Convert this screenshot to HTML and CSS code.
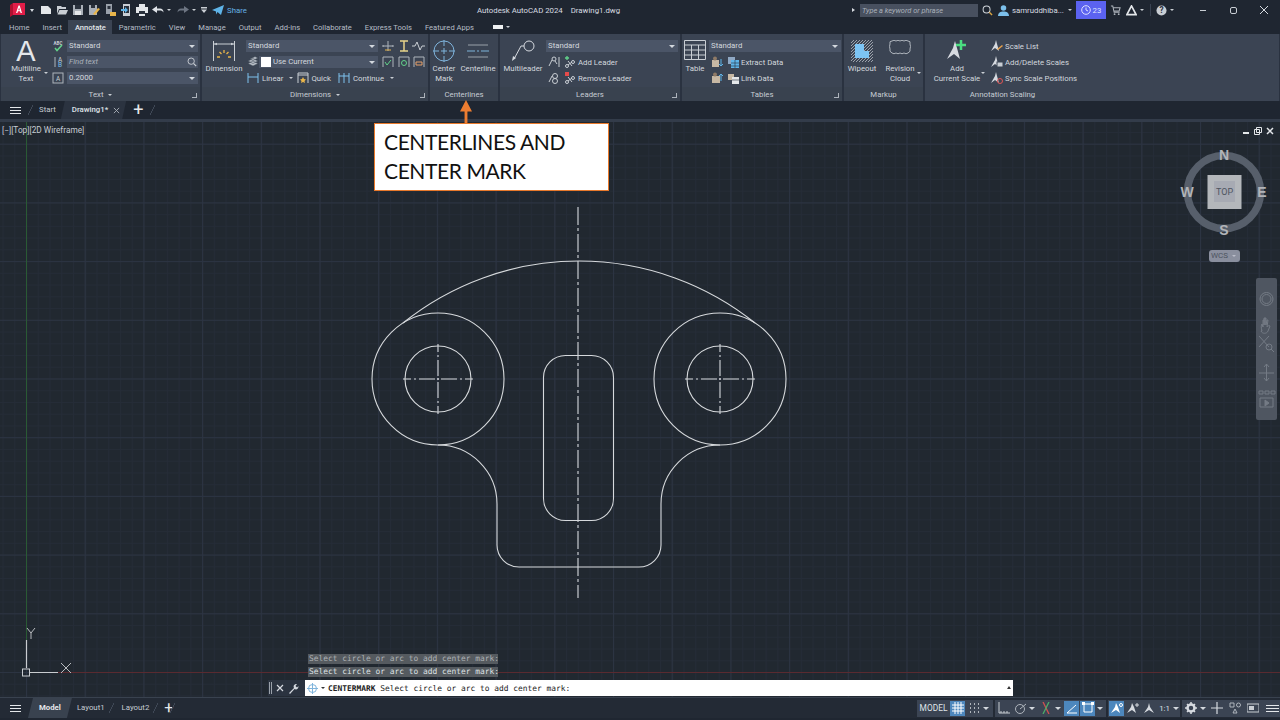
FILE: index.html
```html
<!DOCTYPE html>
<html lang="en">
<head>
<meta charset="utf-8">
<title>Autodesk AutoCAD 2024</title>
<link rel="stylesheet" href="styles.css">
</head>
<body>
<div class="app">
  <header class="titlebar">
    <div class="qa">
      <svg class="logo" width="16" height="14" viewBox="0 0 16 14"><path d="M0 2 3 0h12v12H3l-3 2z" fill="#b01030"/><rect x="3" y="0" width="12" height="12" fill="#e11d48"/><path d="M6 10 8.500 2.500h1.200L12 10h-1.400l-.5-1.700H7.900L7.400 10zM8.300 7.200h1.500l-.7-2.600z" fill="#fff"/></svg>
      <span class="caret lg"></span>
      <svg class="qi first" viewBox="0 0 12 12"><path d="M1 2h7l3 3v5H1z" fill="#e4e7ea"/></svg>
      <svg class="qi" viewBox="0 0 12 12"><path d="M1 2h4l1 1h4v2H3l-2 5zM3.500 6H12l-2 4.500H1.500z" fill="#c9ced4"/></svg>
      <svg class="qi" viewBox="0 0 12 12"><path d="M1 1h10v10H1z" fill="#aab0b8"/><rect x="3" y="1" width="6" height="4" fill="#2a313c"/><rect x="3" y="7" width="6" height="4" fill="#e4e7ea"/></svg>
      <svg class="qi" viewBox="0 0 12 12"><path d="M1 1h8v10H1z" fill="#aab0b8"/><rect x="3" y="1" width="4" height="3" fill="#2a313c"/><path d="m5 10 5-6 2 1-5 6z" fill="#e8b54a"/></svg>
      <svg class="qi" viewBox="0 0 12 12"><path d="M2 0h6v10H2z" fill="#9aa1aa"/><rect x="3.500" y="2" width="3" height="3" fill="#2a313c"/><path d="M6 8h6v4H6z" fill="#e8b54a"/></svg>
      <svg class="qi" viewBox="0 0 12 12"><path d="M3 0h7v12H3z" fill="#c9ced4"/><rect x="4" y="2" width="5" height="7" fill="#2a313c"/><path d="M1 5h4V3l3 3-3 3V7H1z" fill="#5fb4e8"/></svg>
      <svg class="qi" viewBox="0 0 12 12"><path d="M3 0h6v3H3zM0 3h12v6H9v3H3V9H0z" fill="#e4e7ea"/><rect x="3" y="7" width="6" height="3" fill="#2a313c"/></svg>
      <svg class="qi wide" viewBox="0 0 12 10"><path d="M5 1v2.500h3c2 0 3.500 1.500 3.500 4-1-1.500-2-2-3.500-2H5V8L0 4.500z" fill="#dfe3e8"/></svg>
      <span class="caret"></span>
      <svg class="qi wide dim" viewBox="0 0 12 10"><path d="M7 1v2.500H4C2 3.500.5 5 .5 7.500c1-1.500 2-2 3.500-2h3V8l5-3.500z" fill="#6d7582"/></svg>
      <span class="caret"></span>
      <span class="menu-glyph"></span>
      <svg class="share-ico" viewBox="0 0 12 10"><path d="M0 5 12 0 9 10 5.500 7 4 9.500V6.500z" fill="#5fb4e8"/></svg>
      <span class="share">Share</span>
    </div>
    <div class="doc"><span>Autodesk AutoCAD 2024</span><span>Drawing1.dwg</span></div>
    <div class="tools">
      <span class="caret-r"></span>
      <div class="search">Type a keyword or phrase</div>
      <svg class="ti" viewBox="0 0 12 12"><circle cx="5" cy="5" r="3.800" fill="none" stroke="#cfd4da" stroke-width="1.100"/><path d="m8 8 3 3" stroke="#d9a441" stroke-width="1.500"/></svg>
      <svg class="ti user" viewBox="0 0 12 12"><circle cx="6" cy="3.300" r="3" fill="#7cc0ec"/><path d="M0 12c0-3.500 2.500-5 6-5s6 1.500 6 5z" fill="#7cc0ec"/></svg>
      <span class="uname">samruddhiba...</span>
      <span class="caret"></span>
      <div class="trial"><svg width="10" height="10" viewBox="0 0 10 10"><circle cx="5" cy="5" r="4.300" fill="none" stroke="#dfe2ff"/><path d="M5 2.500V5l2 1" fill="none" stroke="#dfe2ff"/></svg>23</div>
      <svg class="ti cart" viewBox="0 0 12 12"><path d="M1 1h2l1.500 7h6M3.500 3H11l-1 3.500H4.200" fill="none" stroke="#aeb4bc" stroke-width="1.100"/><circle cx="5" cy="10" r="1" fill="#aeb4bc"/><circle cx="9.500" cy="10" r="1" fill="#aeb4bc"/></svg>
      <svg class="ti acad" viewBox="0 0 12 12"><path d="M6 1 11 10.500H1z" fill="none" stroke="#e4e7ea" stroke-width="1.800"/></svg>
      <span class="caret"></span>
      <span class="vsep"></span>
      <svg class="ti help" viewBox="0 0 12 12"><circle cx="6" cy="6" r="5.500" fill="#c9ced4"/><text x="6" y="9" class="help-t">?</text></svg>
      <span class="caret"></span>
      <span class="winbtn min"></span>
      <span class="winbtn max"></span>
      <svg class="winx" viewBox="0 0 8 8"><path d="m0 0 8 8M8 0 0 8" stroke="#d6dae0" stroke-width="1"/></svg>
    </div>
  </header>

  <nav class="tabs">
    <span class="tab">Home</span><span class="tab">Insert</span><span class="tab active">Annotate</span><span class="tab">Parametric</span><span class="tab">View</span><span class="tab">Manage</span><span class="tab">Output</span><span class="tab">Add-ins</span><span class="tab">Collaborate</span><span class="tab">Express Tools</span><span class="tab">Featured Apps</span>
    <span class="tab-extra"><i></i><span class="caret"></span></span>
  </nav>

  <section class="ribbon">
    <div class="panel p-text">
      <div class="pbody">
        <div class="bigbtn mtext"><span class="big-a">A</span><span class="lbl">Multiline<br>Text</span><span class="caret corner"></span></div>
        <div class="stack">
          <div class="row"><svg class="ri" viewBox="0 0 12 12"><text x="6" y="4.500" class="abc">ABC</text><path d="m3 8 2 2.500L10 5" fill="none" stroke="#62d38a" stroke-width="1.500"/></svg><div class="combo w131">Standard<span class="darrow"></span></div></div>
          <div class="row"><svg class="ri" viewBox="0 0 12 12"><path d="M3 1v10" stroke="#aeb4bc"/><text x="8" y="5.500" class="abc2">A</text><text x="8" y="11" class="abc3">B</text></svg><div class="combo w131 find">Find text<svg class="mag" viewBox="0 0 12 12"><circle cx="5" cy="5" r="3.800" fill="none" stroke="#c9ced4" stroke-width="1.100"/><path d="m8 8 3 3" stroke="#c9ced4" stroke-width="1.500"/></svg></div></div>
          <div class="row"><svg class="ri" viewBox="0 0 12 12"><rect x="1" y="1" width="10" height="10" fill="none" stroke="#aeb4bc"/><text x="6" y="9" class="abc2">A</text></svg><div class="combo w131">0.2000<span class="darrow"></span></div></div>
        </div>
      </div>
      <div class="ptitle">Text <span class="caret"></span><span class="launch"></span></div>
    </div>

    <div class="panel p-dim">
      <div class="pbody">
        <div class="bigbtn dimb">
          <svg width="22" height="22" viewBox="0 0 22 22"><path d="M.5 1v20M21.500 1v20M1 4h20" fill="none" stroke="#c9ced4"/><path d="M1 4l3-1.200v2.400zM21 4l-3-1.200v2.400z" fill="#c9ced4"/><path d="M11 10v3M6.500 12l2 2M15.500 12l-2 2M4 17h3M15 17h3" stroke="#e8b54a" stroke-width="1.300"/></svg>
          <span class="lbl">Dimension</span>
        </div>
        <div class="stack">
          <div class="row"><div class="combo w132">Standard<span class="darrow"></span></div>
            <svg class="si first" viewBox="0 0 14 12"><path d="M7 1v10M2 5v2M12 5v2M2 6h10" stroke="#aeb4bc" fill="none"/><path d="M4 10h6" stroke="#e8b54a"/></svg>
            <svg class="si" viewBox="0 0 14 12"><path d="M3 1h8M3 11h8" stroke="#e8d38a" stroke-width="1.500"/><path d="M7 1v10" stroke="#e8d38a" stroke-width="1.500"/></svg>
            <svg class="si" viewBox="0 0 14 12"><path d="M0 6h3l2-4 3 8 2-4h3" stroke="#c9ced4" fill="none"/></svg>
          </div>
          <div class="row">
            <svg class="li" viewBox="0 0 12 12"><path d="M1 7.500 6 5l5 2.500L6 10zM1 5 6 2.500 11 5 6 7.500zM3 3 8 .5 11 2 6 4.500z" fill="#b9bfc7" stroke="#3b4453" stroke-width=".5"/></svg>
            <div class="combo w119"><i class="swatch"></i>Use Current<span class="darrow"></span></div>
            <svg class="si first" viewBox="0 0 14 12"><path d="M2 11V1h10v10" fill="none" stroke="#aeb4bc"/><path d="m4 6 2 3 4-5" fill="none" stroke="#62d38a"/></svg>
            <svg class="si" viewBox="0 0 14 12"><path d="M2 11V1h10v10" fill="none" stroke="#aeb4bc"/><circle cx="7" cy="7" r="2.500" fill="none" stroke="#62d38a"/></svg>
            <svg class="si" viewBox="0 0 14 12"><path d="M2 11V1h10v10" fill="none" stroke="#aeb4bc"/><path d="M4 6h6v3H4z" fill="none" stroke="#e8a06a"/></svg>
          </div>
          <div class="row tools3">
            <svg class="di" viewBox="0 0 12 12"><path d="M1 1v10M11 1v10M1 5h10" fill="none" stroke="#7fc1ee"/></svg><span>Linear</span><span class="caret"></span>
            <svg class="di gap" viewBox="0 0 12 12"><path d="M1 11V1h10v10M1 3h10" fill="none" stroke="#c9ced4"/><path d="M6 5l1 2 2 .5-1.500 1.500.5 2-2-1-2 1 .5-2L3 7.500 5 7z" fill="#e8b54a"/></svg><span>Quick</span>
            <svg class="di gap" viewBox="0 0 12 12"><path d="M1 1v10M6 1v10M11 1v10M1 4h10" fill="none" stroke="#7fc1ee"/></svg><span>Continue</span><span class="caret"></span>
          </div>
        </div>
      </div>
      <div class="ptitle">Dimensions <span class="caret"></span><span class="launch"></span></div>
    </div>

    <div class="panel p-center">
      <div class="pbody">
        <div class="bigbtn cmark">
          <svg width="22" height="22" viewBox="0 0 22 22"><circle cx="11" cy="11" r="10" fill="none" stroke="#7fb4dc"/><path d="M0 11h6M8 11h6M16 11h6M11 0v6M11 8v6M11 16v6" stroke="#7fb4dc"/></svg>
          <span class="lbl">Center<br>Mark</span>
        </div>
        <div class="bigbtn cline">
          <svg width="22" height="22" viewBox="0 0 22 22"><path d="M1 5h20M1 17h20" stroke="#9aa1aa"/><path d="M0 11h8M10 11h2M14 11h8" stroke="#7fb4dc"/></svg>
          <span class="lbl">Centerline</span>
        </div>
      </div>
      <div class="ptitle">Centerlines</div>
    </div>

    <div class="panel p-lead">
      <div class="pbody">
        <div class="bigbtn mlead">
          <svg width="24" height="22" viewBox="0 0 24 22"><circle cx="18" cy="6" r="5" fill="none" stroke="#d6dae0"/><path d="M13 6h-3L3 19" fill="none" stroke="#d6dae0"/><path d="m1 21 1-5 3 2z" fill="#d6dae0"/></svg>
          <span class="lbl">Multileader</span>
        </div>
        <div class="stack">
          <div class="row"><div class="combo w132">Standard<span class="darrow"></span></div></div>
          <div class="row act"><svg class="ai" viewBox="0 0 12 12"><circle cx="6" cy="3" r="2" fill="none" stroke="#c9ced4"/><path d="M4 4 1 10M7 5l2 3M11 1v10" fill="none" stroke="#c9ced4"/></svg><svg class="ai" viewBox="0 0 12 12"><path d="M3 0v4M1 2h4" stroke="#62d38a" stroke-width="1.300"/><circle cx="9" cy="6" r="1.500" fill="none" stroke="#c9ced4"/><circle cx="3" cy="10" r="1.500" fill="none" stroke="#c9ced4"/><path d="m4 9 4-3M4 5l4 5" stroke="#c9ced4"/></svg><span>Add Leader</span></div>
          <div class="row act"><svg class="ai" viewBox="0 0 12 12"><circle cx="7" cy="4" r="2.500" fill="none" stroke="#c9ced4"/><circle cx="7" cy="9" r="2.500" fill="none" stroke="#c9ced4"/><path d="M4 4 1 10" stroke="#c9ced4"/></svg><svg class="ai" viewBox="0 0 12 12"><path d="M1 0h4v4H1z" fill="#e54b4b"/><circle cx="9" cy="6" r="1.500" fill="none" stroke="#c9ced4"/><circle cx="3" cy="10" r="1.500" fill="none" stroke="#c9ced4"/><path d="m4 9 4-3M4 5l4 5" stroke="#c9ced4"/></svg><span>Remove Leader</span></div>
        </div>
      </div>
      <div class="ptitle">Leaders<span class="launch"></span></div>
    </div>

    <div class="panel p-table">
      <div class="pbody">
        <div class="bigbtn tbl">
          <svg width="22" height="20" viewBox="0 0 22 20"><path d="M.5.5h21v19H.5zM.5 5h21M.5 10h21M.5 15h21M7.500 5v15M14.500 5v15" fill="none" stroke="#c9ced4"/></svg>
          <span class="lbl">Table</span>
        </div>
        <div class="stack">
          <div class="row"><div class="combo w132">Standard<span class="darrow"></span></div></div>
          <div class="row act"><svg class="ai" viewBox="0 0 12 12"><path d="M1 4h7v7H1z" fill="#c7b8a4"/><circle cx="4" cy="2.500" r="2" fill="#8f7a66"/><path d="M10 3v7M8 8l2 2 2-2" fill="none" stroke="#5fb4e8"/></svg><svg class="ai" viewBox="0 0 12 12"><path d="M1 1h7v7H1z" fill="#8fa8c4"/><path d="M4 4h8v8H4z" fill="#5fb4e8"/><path d="M4 7h8M4 10h8M8 4v8" stroke="#2a313c" stroke-width=".6"/></svg><span>Extract Data</span></div>
          <div class="row act"><svg class="ai" viewBox="0 0 12 12"><path d="M1 4h8v7H1z" fill="#c7b8a4"/><circle cx="4" cy="2.500" r="2" fill="#8f7a66"/><path d="M10 9V2M8 4l2-2 2 2" fill="none" stroke="#5fb4e8"/></svg><svg class="ai" viewBox="0 0 12 12"><path d="M1 2h6v6H1z" fill="#c7b8a4"/><path d="M5 5h7v7H5z" fill="#e4e7ea"/><path d="M5 8h7" stroke="#2a313c" stroke-width=".6"/></svg><span>Link Data</span></div>
        </div>
      </div>
      <div class="ptitle">Tables<span class="launch"></span></div>
    </div>

    <div class="panel p-mark">
      <div class="pbody">
        <div class="bigbtn wipe">
          <svg width="22" height="22" viewBox="0 0 22 22"><defs><pattern id="hatch" width="3" height="3" patternUnits="userSpaceOnUse"><path d="M0 3 3 0" stroke="#b5bac1" stroke-width=".8"/></pattern></defs><rect width="22" height="22" fill="url(#hatch)"/><path d="M4 4h9v7h5v7H4z" fill="#7cc4f4"/></svg>
          <span class="lbl">Wipeout</span>
        </div>
        <div class="bigbtn rev">
          <svg width="22" height="18" viewBox="0 0 22 18"><path d="M3 1q2-1.500 4 0 2-1.500 4 0 2-1.500 4 0 2-1.500 4 0 3 0 2 3 1 2.500 0 5 1 2.500-2 4-2 1.500-4 0-2 1.500-4 0-2 1.500-4 0-2 1.500-4 0-3-1.500-2-4-1-2.500 0-5-1-3 2-3z" fill="none" stroke="#aeb4bc"/></svg>
          <span class="lbl">Revision<br>Cloud</span><span class="caret corner"></span>
        </div>
      </div>
      <div class="ptitle">Markup</div>
    </div>

    <div class="panel p-scale">
      <div class="pbody">
        <div class="bigbtn addscale">
          <svg width="22" height="22" viewBox="0 0 22 22"><path d="M9 1 7 8 1 19l7-5 6 5-3-11z" fill="#d6dae0"/><path d="M15 0v10M10 5h10" stroke="#4ade80" stroke-width="2.500"/></svg>
          <span class="lbl">Add<br>Current Scale</span><span class="caret corner"></span>
        </div>
        <div class="stack">
          <div class="row act"><svg class="ai" viewBox="0 0 12 12"><path d="M5 0 4 4 0 11l4-3 4 3-2-7z" fill="#d6dae0"/><path d="m6 9 5-4 1 1-5 4z" fill="#e8a04a"/></svg><span>Scale List</span></div>
          <div class="row act"><svg class="ai" viewBox="0 0 12 12"><path d="M5 0 4 4 0 11l4-3 4 3-2-7z" fill="#d6dae0"/><rect x="6" y="6" width="6" height="5" fill="#c9ced4" stroke="#3b4453"/></svg><span>Add/Delete Scales</span></div>
          <div class="row act"><svg class="ai" viewBox="0 0 12 12"><path d="M5 0 4 4 0 11l4-3 4 3-2-7z" fill="#d6dae0"/><circle cx="9" cy="9" r="2.500" fill="none" stroke="#e05555"/></svg><span>Sync Scale Positions</span></div>
        </div>
      </div>
      <div class="ptitle short">Annotation Scaling</div>
    </div>
  </section>

  <div class="filetabs">
    <span class="ham"><i></i><i></i><i></i></span>
    <span class="slash"></span>
    <span class="ftab">Start</span>
    <span class="ftab current">Drawing1*<svg class="x" viewBox="0 0 8 8"><path d="m1 1 6 6M7 1 1 7" stroke="#aeb4bc"/></svg></span>
    <span class="plus">+</span>
    <span class="slash"></span>
  </div>

  <main class="stage">
    <svg class="canvas" viewBox="0 122 1280 576" width="1280" height="576">
      <defs>
        <pattern id="minor" x="26" y="2.820" width="11.740" height="11.740" patternUnits="userSpaceOnUse"><path d="M.5 0v11.740M0 .5h11.740" stroke="#252c37" fill="none"/></pattern>
        <pattern id="major" x="26" y="26.300" width="58.700" height="58.700" patternUnits="userSpaceOnUse"><path d="M.5 0v58.700M0 .5h58.700" stroke="#2c3442" fill="none"/></pattern>
        <path id="cmark" d="M-35 0H-27M-24 0H-22M-19 0H-3M-1 0H1M3 0H19M22 0H24M27 0H35M0 -35V-27M0 -24V-22M0 -19V-3M0 -1V1M0 3V19M0 22V24M0 27V35"/>
      </defs>
      <rect x="0" y="122" width="1280" height="576" fill="#212830"/>
      <rect x="0" y="122" width="1280" height="576" fill="url(#minor)"/>
      <rect x="0" y="122" width="1280" height="576" fill="url(#major)"/>
      <path d="M26.500 122V640" stroke="#2a5a34"/>
      <path d="M58 672.500H1280" stroke="#5a2a30"/>
      <g fill="none" stroke="#d6d9dc" stroke-width="1.100">
        <circle cx="438" cy="379" r="66"/>
        <circle cx="438" cy="379" r="33"/>
        <circle cx="720" cy="379" r="66"/>
        <circle cx="720" cy="379" r="33"/>
        <path d="M403 323A281 281 0 0 1 755 323"/>
        <rect x="543.500" y="355.500" width="70" height="165" rx="22"/>
        <path d="M438 445A59 59 0 0 1 497 504V545A22 22 0 0 0 519 567H639A22 22 0 0 0 661 545V504A59 59 0 0 1 720 445"/>
        <path d="M578 207V598" stroke-dasharray="18 3 3 3"/>
        <use href="#cmark" x="438" y="379"/>
        <use href="#cmark" x="720" y="379"/>
      </g>
      <g fill="none" stroke="#c9ccd0">
        <path d="M26.500 640V668M30 672.500H58" stroke-width="1.200"/>
        <rect x="22.500" y="669" width="7" height="7"/>
        <path d="m27 628 4 5 4-5M31 633v6M61 663l10 10M71 663l-10 10" stroke-width=".9"/>
      </g>
      <g>
        <circle cx="1224" cy="192" r="36.500" fill="none" stroke="#575f6b" stroke-width="7.500"/>
        <rect x="1207.500" y="175" width="34" height="34" fill="#b4b7bb"/>
        <rect x="1214" y="181" width="21" height="21" fill="#a7aab3"/>
        <text class="vc-top" x="1224.500" y="195">TOP</text>
        <text class="vc" x="1224" y="160">N</text>
        <text class="vc" x="1187" y="197">W</text>
        <text class="vc" x="1262" y="197">E</text>
        <text class="vc" x="1224" y="235">S</text>
      </g>
    </svg>

    <div class="vp-label">[−][Top][2D Wireframe]</div>
    <div class="vp-ctrl">
      <svg width="8" height="8" viewBox="0 0 8 8"><path d="M1 6h6" stroke="#e4e7ea" stroke-width="2"/></svg>
      <svg width="8" height="8" viewBox="0 0 8 8"><path d="M2.500 .5h5v5h-5zM.5 2.500h5v5h-5z" fill="#212830" stroke="#e4e7ea"/></svg>
      <svg width="8" height="8" viewBox="0 0 8 8"><path d="m1 1 6 6M7 1 1 7" stroke="#e4e7ea" stroke-width="1.500"/></svg>
    </div>
    <div class="wcs">WCS<span class="caret"></span></div>

    <div class="navbar">
      <svg viewBox="0 0 21 142" width="21" height="142">
        <g fill="none" stroke="#747b85">
          <circle cx="10.500" cy="21" r="6.500"/><circle cx="10.500" cy="21" r="4.500"/>
          <path d="M6 53c-1-3-1-6 0-7l1 3V42h1v5-7h1v7-7h1v7l1-5h1l-1 7c1-1 2-2 3-1l-2 5c-1 3-6 3-7 0z"/>
          <path d="M3 58l10 11M13 58 3 69"/><circle cx="13" cy="69" r="3"/><path d="m15 71 3 3"/>
          <path d="M10.500 86v17M3 95h15M8 89l2.500-3 2.500 3M8 100l2.500 3 2.500-3"/>
          <path d="M3 113h4v3H3zM9 113h4v3H9zM15 113h4v3h-4zM4 120h13v9H4z"/><path d="m9 122 4 3-4 3z" fill="#747b85"/>
        </g>
      </svg>
    </div>

    <div class="callout">CENTERLINES AND<br>CENTER MARK</div>

    <div class="cmd-history"><div class="h1">Select circle or arc to add center mark:</div><div class="h2">Select circle or arc to add center mark:</div></div>
    <div class="cmd">
      <div class="cmd-tools"><span class="grip"></span>
        <svg width="8" height="8" viewBox="0 0 8 8"><path d="m1 1 6 6M7 1 1 7" stroke="#d6dae0" stroke-width="1.200"/></svg>
        <svg width="11" height="11" viewBox="0 0 11 11"><path d="M1 10 6 5c-1-2 0-4 3-4L7.500 3 9 4.500 10.500 3c0 3-2 4-4 3L2 11z" fill="#d6dae0"/></svg>
      </div>
      <div class="cmd-input">
        <svg class="cm-ico" width="11" height="11" viewBox="0 0 11 11"><circle cx="5.500" cy="5.500" r="4" fill="none" stroke="#7fb4dc"/><path d="M0 5.500h11M5.500 0v11" stroke="#7fb4dc"/></svg>
        <span class="caret black"></span>
        <span class="cmd-text"><b>CENTERMARK</b> Select circle or arc to add center mark:</span>
        <span class="up"></span>
      </div>
    </div>

    <div class="arrow"></div>
  </main>

  <footer class="statusbar">
    <span class="ham st"><i></i><i></i><i></i></span>
    <span class="ltab current">Model</span><span class="ltab">Layout1</span><span class="slash lt"></span><span class="ltab">Layout2</span><span class="slash lt"></span>
    <span class="plus st">+</span><span class="slash lt"></span>
    <div class="stat">
      <div class="seg s1">
        <span class="model">MODEL</span>
        <span class="sb on"><svg viewBox="0 0 12 12"><path d="M3 0v12M6 0v12M9 0v12M0 3h12M0 6h12M0 9h12" stroke="#fff"/></svg></span>
        <span class="sb"><svg viewBox="0 0 12 12"><path d="M2 2h1M6 2h1M10 2h1M2 6h1M6 6h1M10 6h1M2 10h1M6 10h1M10 10h1" stroke="#d6dae0" stroke-width="1.500"/></svg></span>
        <span class="arw"></span>
      </div>
      <div class="seg s2">
        <span class="sb"><svg viewBox="0 0 12 12"><path d="M1 0v11h11M3 11V9M6 11V9M9 11V9" fill="none" stroke="#c9ced4"/></svg></span>
        <span class="sb"><svg viewBox="0 0 12 12"><circle cx="6" cy="7" r="4.500" fill="none" stroke="#aeb4bc"/><path d="M6 7l6-5" stroke="#aeb4bc"/></svg></span><span class="arw"></span>
        <span class="sb"><svg viewBox="0 0 12 12"><path d="M3 0 9 12" stroke="#d05050" stroke-width="1.300"/><path d="M6 6 9 0" stroke="#4caf6a" stroke-width="1.300"/><path d="M6 6 3 12" stroke="#4caf6a" stroke-width="1.300"/></svg></span><span class="arw"></span>
        <span class="sb on"><svg viewBox="0 0 12 12"><path d="M1 11 10 3M1 11h10" fill="none" stroke="#fff"/></svg></span>
        <span class="sb on"><svg viewBox="0 0 12 12"><path d="M2 2h8v8H2z" fill="none" stroke="#fff"/><path d="M0 0h3v3H0zM9 0h3v3H9z" fill="#fff"/></svg></span><span class="arw"></span>
      </div>
      <div class="seg s3">
        <span class="sb on"><svg viewBox="0 0 12 12"><path d="M5 1 4 5 0 11l5-3 4 3-2-6z" fill="#fff"/><circle cx="10" cy="3" r="1.500" fill="none" stroke="#fff"/></svg></span>
        <span class="sb"><svg viewBox="0 0 12 12"><path d="M5 1 4 5 0 11l5-3 4 3-2-6z" fill="#d6dae0"/><path d="M10 1v4M8 3h4" stroke="#d6dae0"/></svg></span>
        <span class="sb"><svg viewBox="0 0 12 12"><path d="M6 1 5 5 1 11l5-3 5 3-4-6z" fill="#d6dae0"/></svg></span>
        <span class="scale">1:1</span><span class="arw"></span>
      </div>
      <div class="seg s4">
        <span class="sb"><svg viewBox="0 0 12 12"><circle cx="6" cy="6" r="3.500" fill="none" stroke="#d6dae0" stroke-width="2.500"/><path d="M6 0v2M6 10v2M0 6h2M10 6h2M2 2l1.500 1.500M8.500 8.500 10 10M10 2 8.500 3.500M2 10l1.500-1.500" stroke="#d6dae0" stroke-width="1.500"/></svg></span><span class="arw"></span>
        <span class="sb"><svg viewBox="0 0 12 12"><path d="M6 0v12M0 6h12" stroke="#d6dae0" stroke-width="1.200"/></svg></span>
        <span class="sb mg"><svg viewBox="0 0 12 12"><path d="M1 1h4v4H1zM4 11l2-4 2 4z" fill="none" stroke="#aeb4bc"/><circle cx="9.500" cy="3" r="2" fill="none" stroke="#aeb4bc"/></svg></span>
        <span class="sb mg"><svg viewBox="0 0 12 12"><rect x="0" y="2" width="12" height="8" fill="none" stroke="#c9ced4"/><rect x="2" y="4" width="5" height="4" fill="#c9ced4"/></svg></span>
        <span class="ham st2"><i></i><i></i><i></i></span>
      </div>
    </div>
  </footer>
</div>
</body>
</html>
```
FILE: styles.css
```css
* { box-sizing: border-box; }
html, body { margin: 0; padding: 0; background: #0f1317; }
body { width: 1280px; height: 720px; overflow: hidden; }
.app {
  width: 1280px; height: 720px; display: flex; flex-direction: column;
  font-family: Roboto, "Open Sans", sans-serif; font-size: 7.800px; color: #d3d8de;
  background: #1f2631; position: relative;
}
svg { display: block; flex: none; }

.caret { display: inline-block; width: 0; height: 0; border: 2px solid transparent; border-top: 2.500px solid #c9ced4; border-bottom: 0; margin-left: 3px; vertical-align: middle; flex: none; }
.caret.lg { border-width: 2.500px; border-bottom: 0; border-top: 3px solid #d6dae0; margin-left: 4px; }
.caret.black { border-top-color: #333; margin: 0 3px 0 3px; }
.caret-r { width: 0; height: 0; border: 2.500px solid transparent; border-left: 3px solid #d6dae0; border-right: 0; margin-right: 5px; }

/* Title bar */
.titlebar { height: 20px; display: flex; align-items: center; flex: none; }
.qa { width: 477px; display: flex; align-items: center; padding-left: 10px; }
.qi { width: 12px; height: 12px; margin-right: 4px; }
.qi.first { margin-left: 6px; }
.qi.wide { margin-right: 0; }
.qi.dim { margin-left: 6px; }
.menu-glyph { width: 6px; height: 6px; margin: 0 0 0 5px; background: #c9ced4; clip-path: polygon(0 0, 100% 0, 100% 25%, 0 25%, 0 40%, 100% 40%, 50% 100%, 0 40%); }
.share-ico { width: 12px; height: 10px; margin-left: 5px; }
.share { margin-left: 3px; color: #66b2e6; }
.doc { width: 375px; display: flex; gap: 8px; color: #d8dce1; }
.tools { display: flex; align-items: center; flex: 1; }
.search { width: 118px; height: 13px; background: #48505f; color: #aab1ba; font-style: italic; font-size: 7.400px; padding-left: 2px; line-height: 13px; }
.ti { width: 11px; height: 11px; margin-left: 4px; }
.ti.user { margin-left: 5px; }
.uname { margin-left: 3px; color: #d8dce1; width: 53px; white-space: nowrap; }
.trial { width: 30px; height: 18px; margin-left: 4px; background: #5b62f0; color: #dfe2ff; display: flex; align-items: center; justify-content: center; gap: 2px; }
.ti.cart { margin-left: 4px; }
.ti.acad { margin-left: 5px; }
.vsep { width: 1px; height: 12px; background: #3a4352; margin: 0 5px 0 6px; }
.ti.help { margin-left: 0; }
.help-t { font: bold 9px Roboto, sans-serif; fill: #2a313c; text-anchor: middle; }
.winbtn { display: block; width: 6px; }
.winbtn.min { height: 1px; background: #c9ced4; margin-left: 26px; }
.winbtn.max { width: 7px; height: 7px; border: 1px solid #c9ced4; border-radius: 2px; margin-left: 24px; }
.winx { width: 8px; height: 8px; margin-left: 23px; }

/* Tabs */
.tabs { height: 14px; display: flex; align-items: stretch; padding-left: 2.500px; flex: none; font-size: 7.600px; }
.tab { padding: 0 6.500px; line-height: 16px; color: #b6bdc6; white-space: nowrap; }
.tab.active { background: #3b4453; color: #e2e6ea; font-weight: 500; }
.tab-extra { display: flex; align-items: center; margin-left: 13px; }
.tab-extra i { display: block; width: 10px; height: 4.500px; background: #eef0f2; }

/* Ribbon */
.ribbon { height: 67px; flex: none; display: flex; gap: 2px; padding-left: 1px; background: #2a3240; }
.panel { background: #3b4453; display: flex; flex-direction: column; flex: none; }
.pbody { flex: 1; display: flex; min-height: 0; padding-top: 6px; }
.ptitle { height: 14px; line-height: 15px; text-align: center; color: #c6ccd3; position: relative; background: #39424f; }
.ptitle.short { width: 155px; background: transparent; }
.launch { position: absolute; right: 3px; bottom: 3px; width: 5px; height: 5px; border-right: 1px solid #aeb4bc; border-bottom: 1px solid #aeb4bc; }
.p-text { width: 199px; }
.p-dim { width: 226px; }
.p-center { width: 68px; }
.p-lead { width: 180px; }
.p-table { width: 160px; }
.p-mark { width: 79px; }
.p-scale { width: 354px; }

.bigbtn { display: grid; grid-template-rows: 22px auto; row-gap: 2px; justify-items: center; position: relative; flex: none; }
.lbl { display: block; text-align: center; line-height: 10px; white-space: nowrap; }
.corner { position: absolute; right: 0; top: 32px; margin: 0; }
.mtext { width: 50px; }
.mtext .corner { right: 3px; }
.big-a { font-size: 29px; line-height: 23px; height: 22px; color: #e4e7ea; font-family: "Liberation Sans", sans-serif; }
.dimb { width: 44px; }
.cmark { width: 28px; }
.cline { width: 40px; }
.mlead { width: 46px; }
.tbl { width: 26px; }
.wipe { width: 36px; }
.rev { width: 38px; margin-left: 1px; }
.rev .corner { right: -2px; }
.addscale { width: 64px; }
.addscale .corner { right: 4px; }

.stack { display: flex; flex-direction: column; gap: 4px; }
.row { height: 12px; display: flex; align-items: center; white-space: nowrap; }
.ri { width: 12px; height: 12px; margin-right: 3px; margin-left: 1px; }
.abc { font: bold 4.500px Roboto, sans-serif; fill: #c9ced4; text-anchor: middle; }
.abc2 { font: 6.500px Roboto, sans-serif; fill: #c9ced4; text-anchor: middle; }
.abc3 { font: 6.500px Roboto, sans-serif; fill: #7fc1ee; text-anchor: middle; }
.combo { height: 12px; background: #4b5567; line-height: 12px; padding-left: 2px; position: relative; color: #d3d8de; }
.w131 { width: 131px; }
.w132 { width: 132px; }
.w119 { width: 119px; display: flex; align-items: center; }
.find { font-style: italic; color: #aab1ba; }
.mag { position: absolute; right: 1px; top: 1px; width: 10px; height: 10px; }
.darrow { position: absolute; right: 3px; top: 5px; width: 0; height: 0; border: 3px solid transparent; border-top: 3px solid #d3d8de; border-bottom: 0; }
.swatch { display: block; width: 10px; height: 10px; background: #fff; margin-right: 2px; }
.si { width: 14px; height: 12px; margin-left: 1.500px; }
.si.first { margin-left: 3px; }
.li { width: 12px; height: 12px; margin-left: 1px; }
.tools3 { padding-left: 1px; }
.tools3 .di { width: 12px; height: 12px; margin-right: 3px; }
.tools3 .di.gap { margin-left: 7px; }
.tools3 .caret + .di.gap { margin-left: 4px; margin-right: 2px; }
.tools3 .caret { margin-left: 6px; }
.act .ai { width: 12px; height: 12px; margin-right: 4px; }
.act .ai + .ai { margin-right: 2px; }
.p-lead .act { padding-left: 2px; }
.p-table .act { padding-left: 2px; }
.p-table .stack { margin-left: 1px; }
.p-scale .stack { margin-left: 2px; }
.p-scale .act .ai { margin-right: 2px; }

/* File tabs */
.filetabs { height: 18px; display: flex; align-items: center; flex: none; background: #1f2631; }
.ham { display: flex; flex-direction: column; gap: 2px; width: 11px; margin-left: 10px; }
.ham i { display: block; height: 1px; background: #e4e7ea; }
.slash { display: block; width: 5px; height: 10px; margin-left: 7px; background: linear-gradient(to top left, transparent 44%, #3f4856 44%, #3f4856 56%, transparent 56%); flex: none; }
.slash.lt { margin-left: -3px; margin-right: 3px; }
.ftab { height: 18px; line-height: 18px; color: #c6ccd3; display: flex; align-items: center; padding: 0 5px 0 6px; }
.ftab.current { background: #2b3340; color: #dfe3e8; font-weight: 500; padding: 0 6px 0 11px; clip-path: polygon(4px 0, 100% 0, calc(100% - 4px) 100%, 0 100%); }
.x { width: 7px; height: 7px; margin-left: 5px; }
.plus { font-size: 18px; line-height: 18px; color: #e4e7ea; margin-left: 7px; }

/* Stage */
.stage { position: relative; flex: 1; margin-top: 3px; min-height: 0; box-shadow: 0 -3px 0 #333c4a; }
.canvas { position: absolute; left: 0; top: 0; }
.vc { font: bold 14px "Liberation Sans", sans-serif; fill: #b2b4b8; text-anchor: middle; }
.vc-top { font: 9px Roboto, sans-serif; fill: #4d5460; text-anchor: middle; }
.vp-label { position: absolute; left: 2px; top: 3px; color: #c6ccd3; font-size: 8.300px; }
.vp-ctrl { position: absolute; left: 1242px; top: 5px; display: flex; gap: 4px; }
.wcs { position: absolute; left: 1209px; top: 128px; width: 31px; height: 12px; background: #8a8f9e; border-radius: 3px; color: #4d5460; font-size: 8px; line-height: 12px; padding-left: 2px; }
.wcs .caret { border-top-color: #b9bcc8; margin-left: 4px; }
.navbar { position: absolute; left: 1256px; top: 156px; width: 21px; height: 142px; background: #4f5661; border-radius: 2px; }
.callout { position: absolute; left: 374px; top: 1px; width: 235px; height: 68px; background: #fff; border: 1px solid #e8792b; color: #111; font-family: Lato, "Open Sans", sans-serif; font-size: 21px; letter-spacing: -.4px; line-height: 29px; padding: 3px 9px; }
.arrow { position: absolute; left: 460px; top: -22px; width: 12px; height: 23px; background: #ed7d31; clip-path: polygon(50% 0, 100% 50%, 62% 50%, 62% 100%, 38% 100%, 38% 50%, 0 50%); }
.cmd-history { position: absolute; left: 308px; top: 532px; width: 190px; font-family: "DejaVu Sans Mono", "Liberation Mono", monospace; font-size: 7.900px; }
.h1, .h2 { height: 10px; line-height: 10px; background: #555a5f; white-space: nowrap; padding-left: 1px; }
.h1 { color: #aeb2b6; margin-bottom: 3px; }
.h2 { color: #dfe2e5; }
.cmd { position: absolute; left: 268px; top: 558px; width: 745px; height: 16px; display: flex; }
.cmd-tools { width: 37px; background: #2b3340; display: flex; align-items: center; gap: 4px; padding-left: 1px; }
.grip { display: block; width: 3px; height: 12px; border-left: 1px solid #9aa1aa; border-right: 1px solid #9aa1aa; }
.cmd-input { flex: 1; background: #fff; color: #222; display: flex; align-items: center; font-family: "DejaVu Sans Mono", "Liberation Mono", monospace; font-size: 7.900px; padding-left: 2px; position: relative; }
.cmd-text { white-space: nowrap; }
.up { position: absolute; right: 2px; top: 6px; width: 0; height: 0; border: 2.500px solid transparent; border-bottom: 3px solid #333; border-top: 0; }

/* Status bar */
.statusbar { height: 20px; margin-bottom: 2px; flex: none; display: flex; align-items: center; background: #232a35; box-shadow: 0 -1px 0 #39424f; position: relative; }
.ham.st { margin-left: 10px; width: 11px; }
.ltab { height: 20px; line-height: 20px; padding: 0 7px 0 5px; color: #c6ccd3; }
.ltab.current { background: #39424f; color: #e4e7ea; font-weight: 700; margin-left: 7px; clip-path: polygon(5px 0, 100% 0, calc(100% - 5px) 100%, 0 100%); padding: 0 11px 0 11px; }
.plus.st { margin-left: 3px; font-size: 16px; }
.stat { margin-left: auto; display: flex; height: 20px; align-items: center; width: 363px; }
.seg { display: flex; align-items: center; height: 17px; background: #3b4453; flex: none; gap: 1px; padding: 0 1px; margin-right: 2px; }
.s1 { width: 76px; }
.s2 { width: 111px; }
.s3 { width: 72px; }
.s3 .arw { margin: 0; }
.s4 { width: 98px; margin-right: 0; }
.model { width: 31px; text-align: center; color: #dfe3e8; font-size: 8.400px; }
.sb { width: 15px; height: 15px; display: flex; align-items: center; justify-content: center; flex: none; }
.sb svg { width: 12px; height: 12px; }
.sb.on { background: #4d87bd; }
.sb.mg { margin-left: 2px; }
.arw { width: 0; height: 0; border: 3px solid transparent; border-top: 3px solid #d3d8de; border-bottom: 0; margin: 0 2px 0 1px; flex: none; }
.scale { width: 15px; text-align: center; color: #dfe3e8; }
.ham.st2 { width: 13px; margin-left: 5px; }
```
